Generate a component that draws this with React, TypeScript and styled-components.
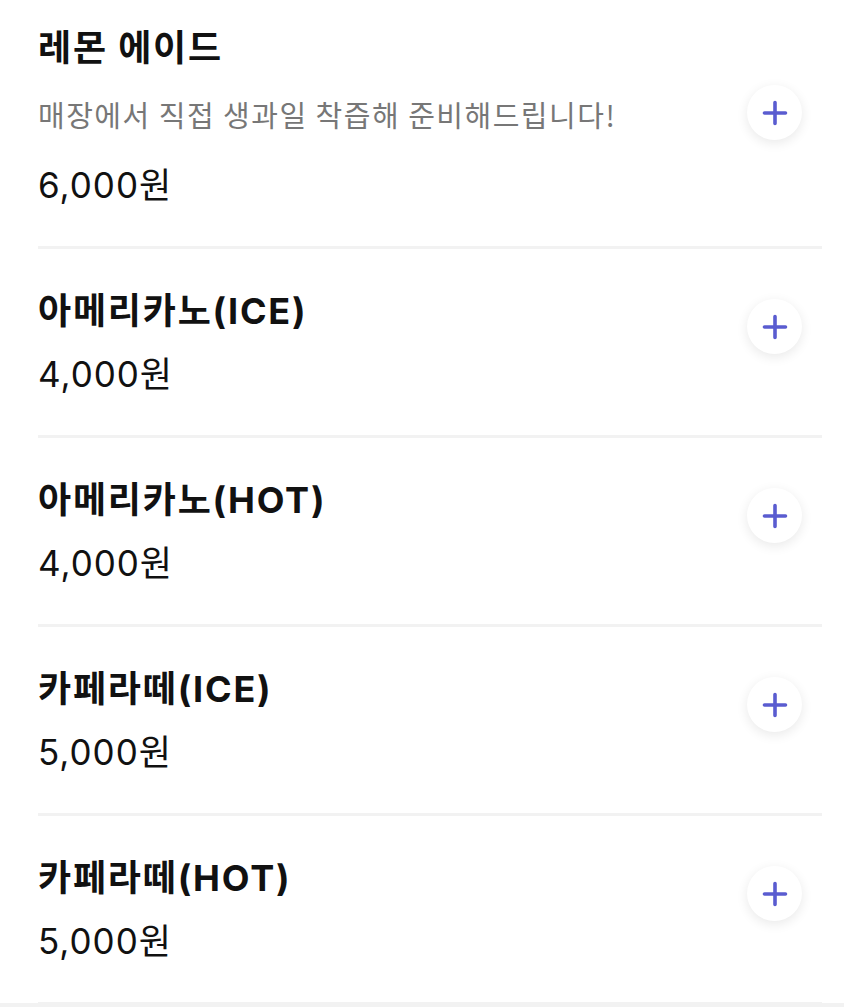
import React from 'react'
import styled, { createGlobalStyle } from 'styled-components'

const menus = [
  { name: '레몬 에이드', description: '매장에서 직접 생과일 착즙해 준비해드립니다!', price: 6000 },
  { name: '아메리카노(ICE)', price: 4000 },
  { name: '아메리카노(HOT)', price: 4000 },
  { name: '카페라떼(ICE)', price: 5000 },
  { name: '카페라떼(HOT)', price: 5000 },
]

const formatPrice = (price: number) => `${price.toLocaleString('ko-KR')}원`

const PlusIcon: React.FC = () => (
  <svg width="26" height="26" viewBox="0 0 26 26" fill="none">
    <path
      d="M13 2.5v21M2.5 13h21"
      stroke="#5a5cd0"
      strokeWidth="3.6"
      strokeLinecap="round"
    />
  </svg>
)

const App: React.FC = () => {
  return (
    <>
      <GlobalStyle />
      <MenuList>
        {menus.map((menu) => (
          <MenuRow key={menu.name} hasDescription={!!menu.description}>
            <InfoArea>
              <MenuName>{menu.name}</MenuName>
              {menu.description && <Description>{menu.description}</Description>}
              <Price>{formatPrice(menu.price)}</Price>
            </InfoArea>
            <AddButton type="button" aria-label="담기" hasDescription={!!menu.description}>
              <PlusIcon />
            </AddButton>
          </MenuRow>
        ))}
      </MenuList>
      <BottomBar />
    </>
  )
}

const GlobalStyle = createGlobalStyle`
  html, body {
    margin: 0;
    background: #ffffff;
    font-family: Inter, 'Noto Sans CJK KR', sans-serif;
    color: #111111;
  }
`

const MenuList = styled.ul`
  list-style: none;
  margin: 0;
  padding: 0 22px 0 38px;
  height: 1003px;
  overflow: hidden;
`

const MenuRow = styled.li<{ hasDescription: boolean }>`
  display: flex;
  justify-content: space-between;
  align-items: flex-start;
  padding: ${(p) => (p.hasDescription ? '26px 0 39px' : '40px 0 39px')};
  border-bottom: 3px solid #f2f2f2;
`

const InfoArea = styled.div`
  display: flex;
  flex-direction: column;
`

const MenuName = styled.div`
  font-size: 36px;
  font-weight: 700;
  line-height: 44px;
  letter-spacing: 1.8px;
`

const Description = styled.div`
  margin: 26px 0 12px;
  font-family: 'Noto Sans CJK KR', sans-serif;
  font-size: 29px;
  line-height: 36px;
  letter-spacing: 1.5px;
  color: #777777;
`

const Price = styled.div`
  margin-top: 19px;
  font-size: 35px;
  font-weight: 400;
  line-height: 44px;
  letter-spacing: 1px;
`

const AddButton = styled.button<{ hasDescription: boolean }>`
  display: flex;
  align-items: center;
  justify-content: center;
  width: 55px;
  height: 55px;
  margin-top: ${(p) => (p.hasDescription ? '59px' : '10px')};
  margin-right: 20px;
  padding: 0;
  border: none;
  border-radius: 50%;
  background: #ffffff;
  box-shadow: 0 3px 12px rgba(0, 0, 0, 0.09);
  cursor: pointer;
`

const BottomBar = styled.div`
  height: 4px;
  background: #f2f2f2;
`

export default App
